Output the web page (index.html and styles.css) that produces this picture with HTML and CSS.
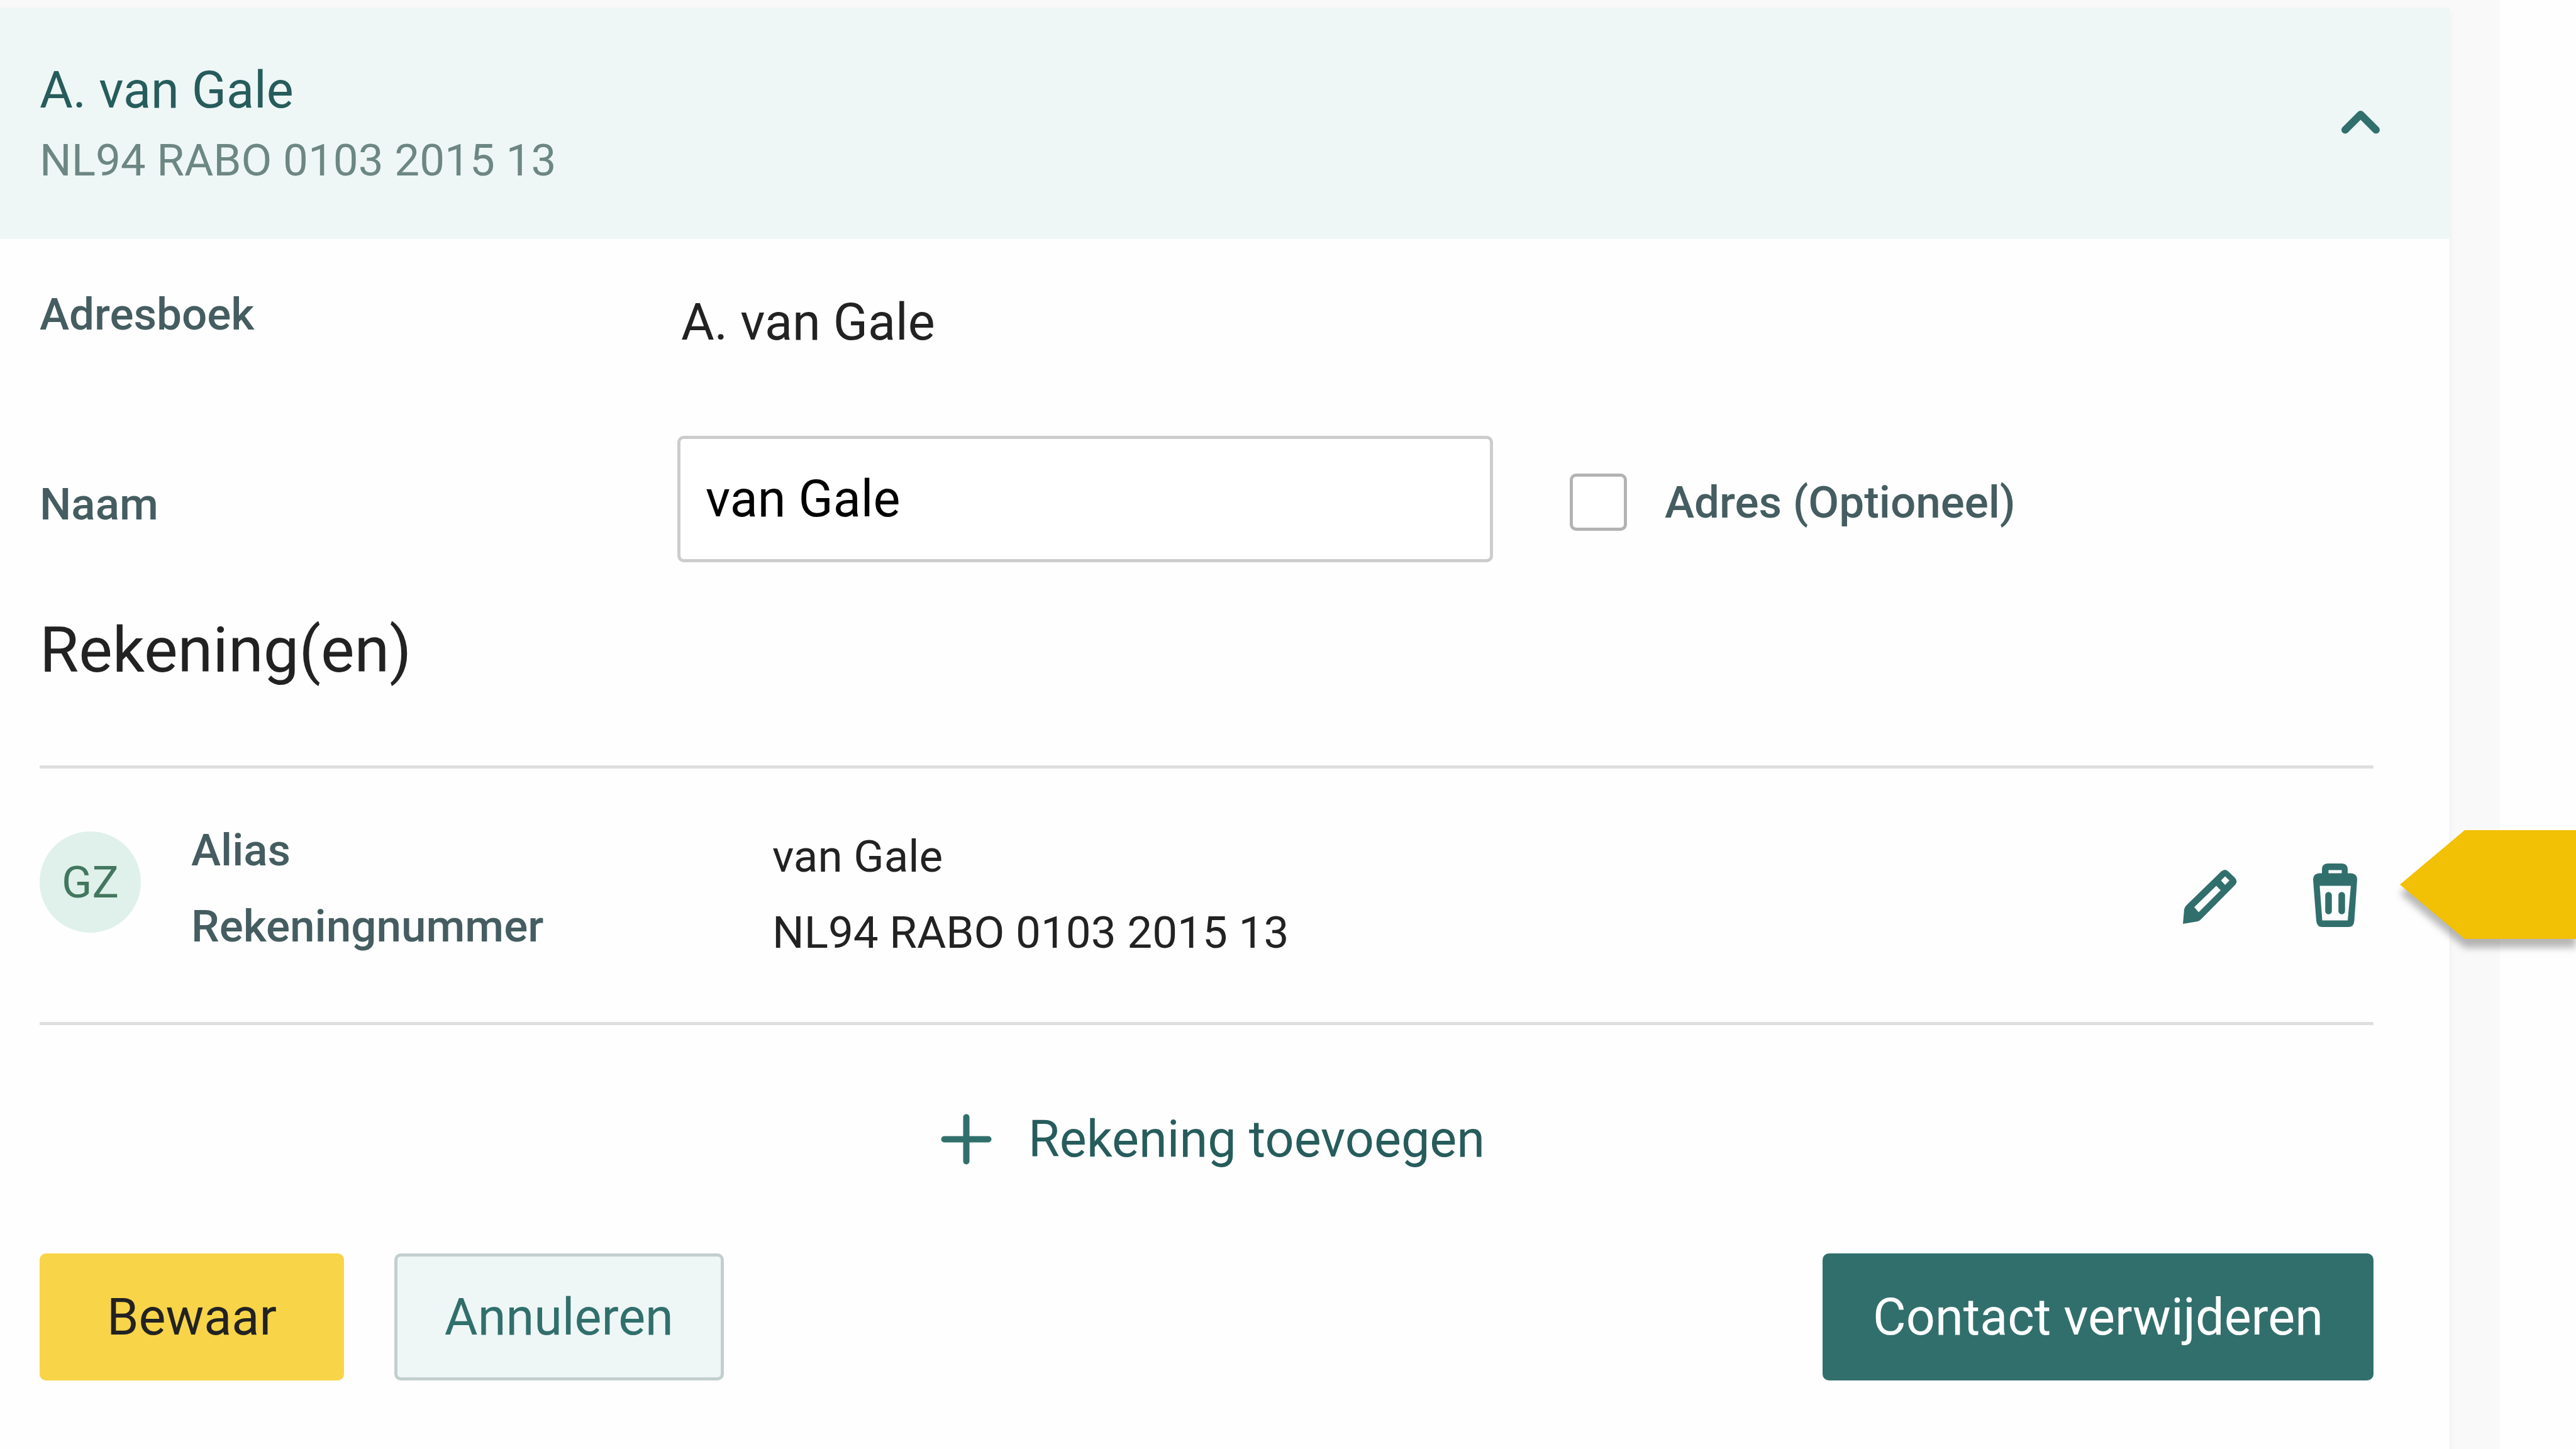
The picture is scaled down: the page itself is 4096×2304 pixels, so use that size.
FILE: index.html
```html
<!DOCTYPE html>
<html lang="nl">
<head>
<meta charset="utf-8">
<meta name="viewport" content="width=device-width, initial-scale=1">
<title>Adresboek</title>
<link rel="stylesheet" href="styles.css">
</head>
<body>
<main class="page">
  <section class="panel">
    <button class="panel-header" type="button" aria-expanded="true">
      <span class="panel-heading">
        <span class="panel-title">A. van Gale</span>
        <span class="panel-subtitle">NL94 RABO 0103 2015 13</span>
      </span>
      <svg class="icon" viewBox="0 0 121 121" aria-hidden="true">
        <path d="M36 72.500L60.500 48L85 72.500" fill="none" stroke="currentColor" stroke-width="12" stroke-linecap="round" stroke-linejoin="round"/>
      </svg>
    </button>

    <form class="panel-body">
      <div class="field-row field-row-top">
        <span class="label">Adresboek</span>
        <span class="static-value">A. van Gale</span>
      </div>

      <div class="field-row">
        <label class="label label-input" for="naam">Naam</label>
        <input class="text-input" id="naam" type="text" value="van Gale">
        <div class="check">
          <input class="checkbox" id="adres" type="checkbox">
          <label class="label" for="adres">Adres (Optioneel)</label>
        </div>
      </div>

      <h2 class="section-title">Rekening(en)</h2>

      <div class="account">
        <span class="avatar">GZ</span>
        <dl class="account-data">
          <div class="account-line">
            <dt class="label">Alias</dt>
            <dd>van Gale</dd>
          </div>
          <div class="account-line">
            <dt class="label">Rekeningnummer</dt>
            <dd>NL94 RABO 0103 2015 13</dd>
          </div>
        </dl>
        <div class="account-actions">
          <button class="icon-button" type="button" aria-label="Wijzigen">
            <svg class="icon" viewBox="0 0 121 121" aria-hidden="true">
              <path fill="currentColor" fill-rule="evenodd" d="M18 104L20 81Q20.500 77 24 74L79 20.500Q85 15.500 90 20.500L100.500 30.500Q106 36 101 42L47 96.500Q44 100 39 100.500ZM71 43.500L36 77.500L43 85.500L78 50.500ZM85 28.500L78.500 35L85 42L92 35Z"/>
            </svg>
          </button>
          <button class="icon-button" type="button" aria-label="Verwijderen">
            <svg class="icon" viewBox="0 0 121 121" aria-hidden="true">
              <path fill="currentColor" fill-rule="evenodd" d="M39 23.500V18Q39 8 48 8H71Q80 8 80 18V23.500H84Q95 23.500 95 34L90.500 99Q90 109 81 109H39.500Q31 109 30 99L25 34Q25 23.500 36 23.500ZM49.500 18.500V23.500H70.500V18.500ZM35.500 43.500L39.500 98.500H80L85 43.500Z"/>
              <path fill="none" stroke="currentColor" stroke-width="10.500" stroke-linecap="round" d="M49.500 58.500V83.500M70.500 58.500V83.500"/>
            </svg>
          </button>
        </div>
        <svg class="pointer" viewBox="0 0 280 173" aria-hidden="true">
          <path fill="#f2c004" d="M0 86.500L103 0H280V173H103Z"/>
        </svg>
      </div>

      <button class="add-button" type="button">
        <svg class="icon" viewBox="0 0 121 121" aria-hidden="true">
          <path d="M60.500 25.500V95.500M25.500 60.500H95.500" fill="none" stroke="currentColor" stroke-width="10" stroke-linecap="round"/>
        </svg>
        <span class="add-label">Rekening toevoegen</span>
      </button>

      <div class="buttons">
        <button class="button button-save" type="submit">Bewaar</button>
        <button class="button button-cancel" type="button">Annuleren</button>
        <button class="button button-delete" type="button">Contact verwijderen</button>
      </div>
    </form>
  </section>
</main>
</body>
</html>
```
FILE: styles.css
```css
* {
  box-sizing: border-box;
}

body {
  margin: 0;
  background: #fefefe;
  color: #222;
  font-family: Roboto, "Liberation Sans", sans-serif;
  font-size: 81px;
  line-height: 121px;
}

button,
input {
  margin: 0;
  font: inherit;
}

button {
  padding: 0;
  border: 0;
  background: none;
  cursor: pointer;
}

.page {
  display: flex;
  min-height: 100vh;
  margin-right: 121px;
  padding: 12px 80px 0 0;
  background: #f9f9f9;
}

.panel {
  flex: 1;
  min-width: 0;
  background: #fefefe;
  box-shadow: 0 10px 10px rgba(0, 0, 0, 0.06);
}

.panel-header {
  display: flex;
  align-items: center;
  justify-content: space-between;
  width: 100%;
  padding: 71px 81px 75px 63px;
  background: #eef7f6;
  color: #316f6c;
  text-align: left;
}

.panel-heading {
  display: flex;
  flex-direction: column;
}

.panel-title {
  color: #275c5c;
}

.panel-subtitle {
  color: #6d8783;
  font-size: 71px;
  line-height: 101px;
}

.icon {
  display: block;
  flex: none;
  width: 121px;
  height: 121px;
}

.panel-body {
  padding: 69px 121px 108px 63px;
}

.label {
  color: #455d60;
  font-size: 71px;
  font-weight: 500;
}

.field-row {
  display: grid;
  grid-template-columns: 1014px minmax(0, 1297px) auto;
  align-items: center;
  justify-content: start;
}

.field-row-top {
  align-items: start;
  margin-bottom: 120px;
}

.field-row-top .label {
  line-height: 101px;
}

.static-value {
  padding-top: 3px;
  padding-left: 6px;
}

.label-input {
  padding-top: 16px;
}

.text-input {
  width: 100%;
  height: 201px;
  padding: 0 40px;
  border: 5px solid #ccc;
  border-radius: 10px;
  background: #fff;
  color: #000;
}

.check {
  display: flex;
  align-items: center;
  gap: 60px;
  padding-top: 10px;
  padding-left: 122px;
}

.checkbox {
  appearance: none;
  width: 91px;
  height: 91px;
  border: 5px solid #b3b3b3;
  border-radius: 10px;
  background: #fff;
}

.section-title {
  margin: 79px 0 123px;
  font-size: 101px;
  font-weight: 400;
}

.account {
  position: relative;
  display: flex;
  align-items: flex-start;
  padding: 69px 0 82px;
  border-top: 5px solid #dedede;
  border-bottom: 5px solid #dedede;
}

.avatar {
  flex: none;
  width: 161px;
  height: 161px;
  margin: 31px 80px 0 0;
  border-radius: 50%;
  background: #dff1ea;
  color: #43775f;
  font-size: 71px;
  line-height: 161px;
  text-align: center;
}

.account-data {
  flex: 1;
  margin: 0;
  padding-bottom: 10px;
  font-size: 71px;
}

.account-line {
  display: grid;
  grid-template-columns: 924px 1fr;
  height: 121px;
}

.account-line dd {
  margin: 0;
  padding-top: 10px;
}

.account-actions {
  display: flex;
  gap: 79px;
  padding-top: 74px;
  color: #316f6c;
}

.icon-button {
  color: inherit;
}

.pointer {
  position: absolute;
  top: 98px;
  right: -322px;
  width: 280px;
  height: 173px;
  overflow: visible;
  filter: drop-shadow(0 14px 6px rgba(0, 0, 0, 0.28));
}

.add-button {
  display: flex;
  align-items: center;
  gap: 38px;
  margin: 121px auto;
  color: #316f6c;
}

.add-label {
  color: #275c5c;
}

.buttons {
  display: flex;
  gap: 80px;
}

.button {
  height: 202px;
  border-radius: 10px;
}

.button-save {
  padding: 0 107px;
  background: #f8d448;
  color: #222;
}

.button-cancel {
  padding: 0 75px;
  border: 5px solid #c3cfcf;
  background: #eef7f6;
  color: #316f6c;
}

.button-delete {
  margin-left: auto;
  padding: 0 80px;
  background: #316f6c;
  color: #fff;
}
```
